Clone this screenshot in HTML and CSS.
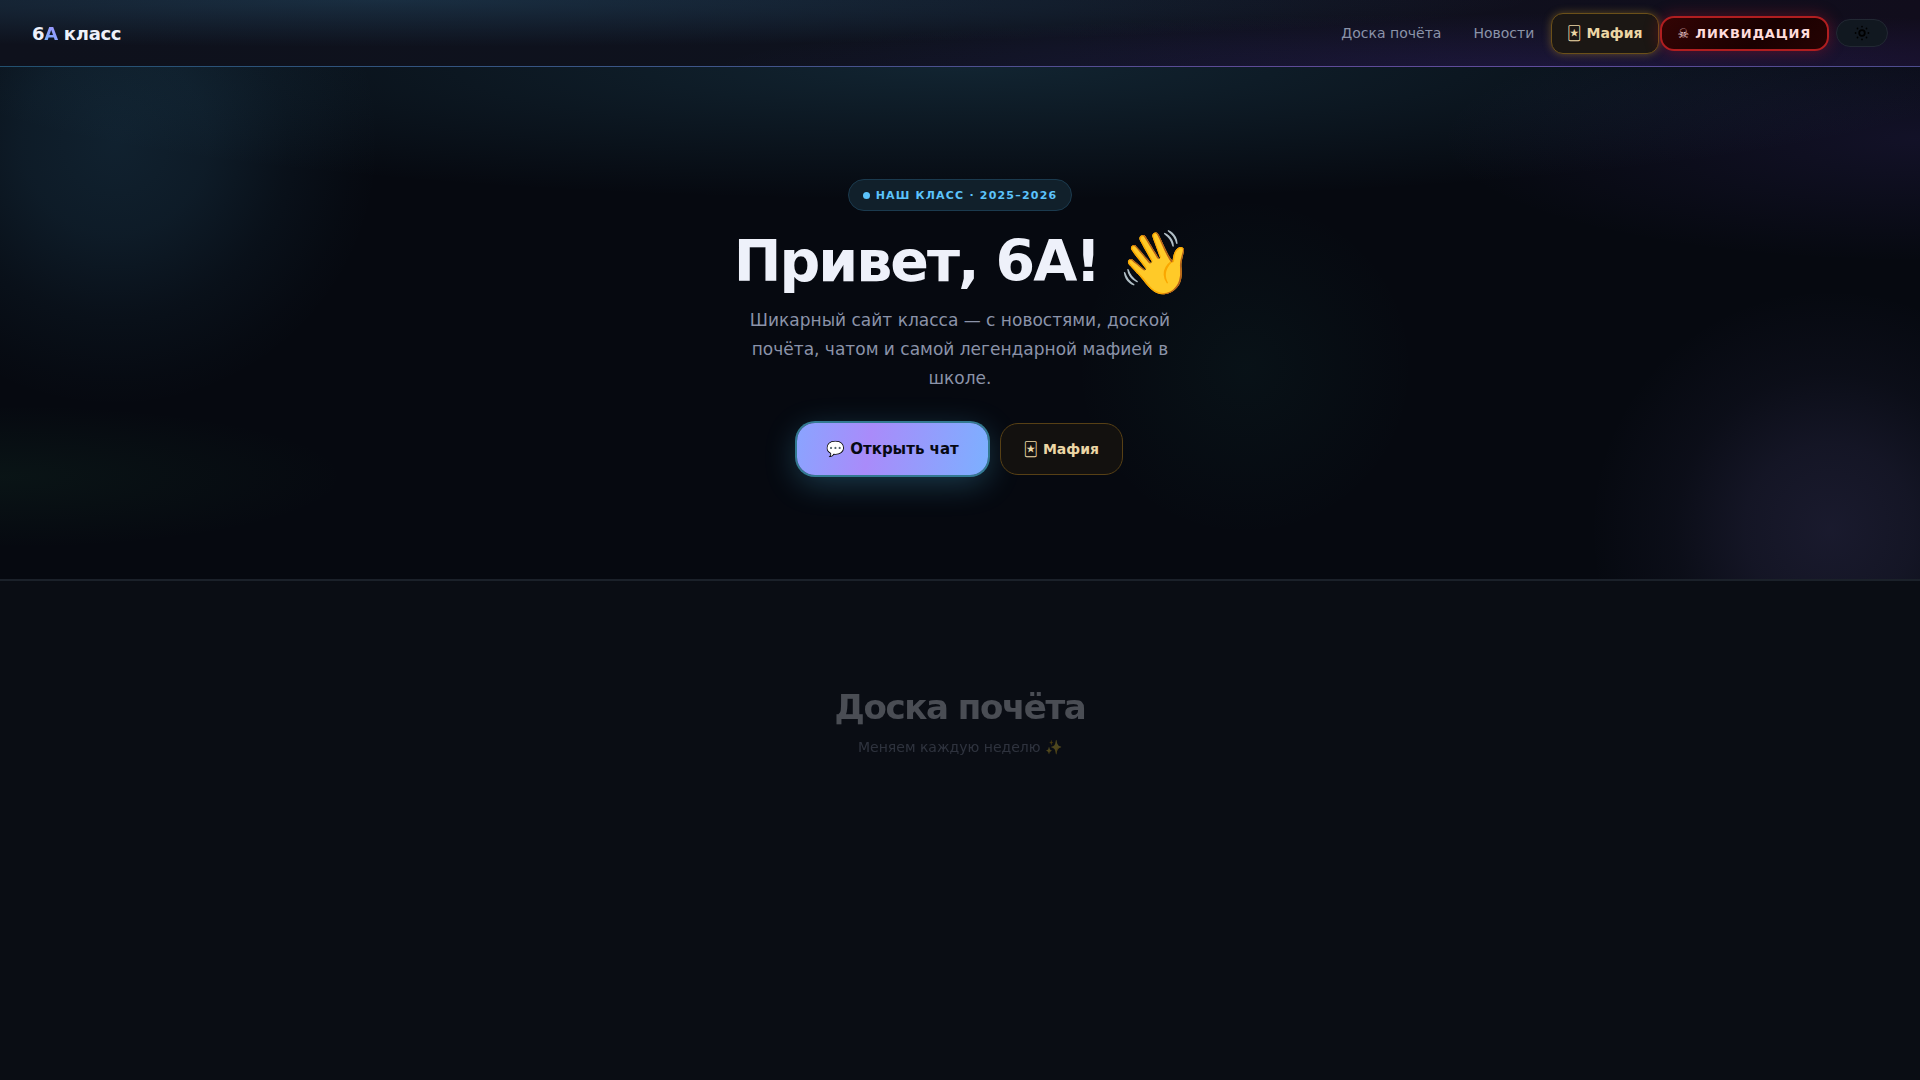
FILE: index.html
```html
<!DOCTYPE html>
<html lang="ru">
<head>
  <meta charset="UTF-8">
  <meta name="viewport" content="width=device-width, initial-scale=1.0">
  <title>6А класс</title>
  <link rel="stylesheet" href="styles.css">
</head>
<body>
  <!-- Шапка -->
  <header class="header">
    <a class="logo" href="#top">6<span class="logo-accent">А</span> класс</a>
    <nav class="nav">
      <a class="nav-link" href="#honor">Доска почёта</a>
      <a class="nav-link" href="#news">Новости</a>
      <a class="nav-mafia" href="#mafia">🃏 Мафия</a>
      <a class="nav-liq" href="#liquidation">☠ ЛИКВИДАЦИЯ</a>
      <button class="theme-toggle" type="button" aria-label="Сменить тему">
        <svg class="theme-icon" viewBox="0 0 16 16" aria-hidden="true">
          <circle cx="8" cy="8" r="2.8" fill="none" stroke="#000" stroke-width="1.8"/>
          <g fill="#000">
            <circle cx="8" cy="1.6" r="0.9"/>
            <circle cx="8" cy="14.4" r="0.9"/>
            <circle cx="1.6" cy="8" r="0.9"/>
            <circle cx="14.4" cy="8" r="0.9"/>
            <circle cx="3.5" cy="3.5" r="0.9"/>
            <circle cx="12.5" cy="3.5" r="0.9"/>
            <circle cx="3.5" cy="12.5" r="0.9"/>
            <circle cx="12.5" cy="12.5" r="0.9"/>
          </g>
        </svg>
      </button>
    </nav>
  </header>

  <main>
    <!-- Первый экран -->
    <section class="hero" id="top">
      <div class="blob blob-blue"></div>
      <div class="blob blob-purple"></div>
      <div class="blob blob-green"></div>
      <div class="hero-inner">
        <span class="badge"><span class="badge-dot"></span>НАШ КЛАСС · 2025–2026</span>
        <h1 class="hero-title">Привет, 6А! <span class="wave">👋</span></h1>
        <p class="hero-text">Шикарный сайт класса — с новостями, доской почёта, чатом и самой легендарной мафией в школе.</p>
        <div class="hero-buttons">
          <a class="btn btn-primary" href="#chat">💬 Открыть чат</a>
          <a class="btn btn-mafia" href="#mafia">🃏 Мафия</a>
        </div>
      </div>
    </section>

    <!-- Доска почёта -->
    <section class="honor" id="honor">
      <div class="section-head">
        <h2 class="section-title">Доска почёта</h2>
        <p class="section-text">Меняем каждую неделю ✨</p>
      </div>
    </section>
  </main>
</body>
</html>
```
FILE: styles.css
```css
* {
  box-sizing: border-box;
  margin: 0;
  padding: 0;
}

body {
  font-family: "DejaVu Sans", sans-serif;
  background: #0a0d14;
  color: #eef1fa;
  min-height: 100vh;
}

a {
  text-decoration: none;
}

/* Шапка */
.header {
  position: relative;
  display: flex;
  align-items: center;
  justify-content: space-between;
  height: 67px;
  padding: 0 32px 1px;
  background:
    linear-gradient(90deg, #22506f, #3c5688 35%, #5d4b97 65%, #5f4d9c 80%, #4d4d8e) bottom / 100% 1px no-repeat,
    radial-gradient(ellipse 60% 70% at 20% 0%, rgba(70, 160, 210, 0.2), transparent),
    radial-gradient(ellipse 45% 80% at 82% 100%, rgba(110, 70, 255, 0.13), transparent),
    linear-gradient(90deg, #0e111c, #0e121e 55%, #110d1c);
}

.logo {
  font-size: 18px;
  font-weight: 700;
  letter-spacing: -0.3px;
  color: #eef1fa;
}

.logo-accent {
  background: linear-gradient(45deg, #6cb6ff, #a98bfa);
  -webkit-background-clip: text;
  background-clip: text;
  color: transparent;
}

.nav {
  display: flex;
  align-items: center;
}

.nav-link {
  padding: 8px 16px;
  font-size: 14px;
  line-height: 16px;
  color: #8b93a9;
}

.nav-mafia {
  margin: 0 1px;
  padding: 12px 15px;
  border: 1px solid #6b5019;
  border-radius: 12px;
  background: #1b1714;
  box-shadow: 0 0 8px rgba(212, 160, 40, 0.4);
  font-size: 14px;
  line-height: 15px;
  font-weight: 700;
  color: #ecd6a5;
}

.nav-liq {
  padding: 8px 16px;
  border: 2px solid #b01e20;
  border-radius: 14px;
  background: linear-gradient(135deg, #330404, #190000 60%, #260303);
  box-shadow: 0 0 16px rgba(220, 20, 40, 0.35);
  font-size: 13px;
  line-height: 15px;
  font-weight: 700;
  letter-spacing: 0.8px;
  color: #ffdcdc;
}

.theme-toggle {
  display: flex;
  align-items: center;
  justify-content: center;
  width: 52px;
  height: 28px;
  margin-left: 7px;
  border: 1px solid #222833;
  border-radius: 14px;
  background: #111820;
  cursor: pointer;
}

.theme-icon {
  width: 16px;
  height: 16px;
}

/* Первый экран */
.hero {
  position: relative;
  overflow: hidden;
  padding: 112px 24px 104px;
  border-bottom: 2px solid #1b212a;
  background:
    radial-gradient(ellipse 54% 26% at 50% 0%, rgba(70, 160, 200, 0.18), transparent),
    radial-gradient(ellipse 25% 24% at 100% 14%, rgba(120, 85, 230, 0.11), transparent),
    radial-gradient(ellipse 18% 14% at 0% 80%, rgba(50, 150, 90, 0.08), transparent),
    #060910;
}

.blob {
  position: absolute;
  border-radius: 50%;
}

.blob-blue {
  left: -150px;
  top: -190px;
  width: 530px;
  height: 530px;
  background: radial-gradient(closest-side, rgba(70, 160, 210, 0.16), rgba(70, 160, 210, 0.12) 35%, rgba(70, 160, 210, 0.05) 65%, rgba(70, 160, 210, 0.01) 90%, transparent);
}

.blob-purple {
  right: -150px;
  bottom: -190px;
  width: 480px;
  height: 480px;
  background: radial-gradient(closest-side, rgba(145, 130, 225, 0.14), rgba(145, 130, 225, 0.1) 35%, rgba(145, 130, 225, 0.04) 65%, rgba(145, 130, 225, 0.01) 90%, transparent);
}

.blob-green {
  left: 56%;
  top: 130px;
  width: 340px;
  height: 340px;
  background: radial-gradient(closest-side, rgba(50, 180, 160, 0.05), transparent);
}

.hero-inner {
  position: relative;
  display: flex;
  flex-direction: column;
  align-items: center;
  text-align: center;
}

.badge {
  display: flex;
  align-items: center;
  gap: 6px;
  padding: 9px 14px 8px;
  border: 1px solid #1b3a4e;
  border-radius: 16px;
  background: #11202b;
  font-size: 11px;
  line-height: 13px;
  font-weight: 700;
  letter-spacing: 1.2px;
  color: #5cc3fb;
}

.badge-dot {
  width: 7px;
  height: 7px;
  border-radius: 50%;
  background: #5cc3fb;
}

.hero-title {
  align-self: stretch;
  margin-top: 18px;
  font-size: 57px;
  line-height: 64px;
  font-weight: 700;
  letter-spacing: -2px;
}

/* рука чуть крупнее текста */
.wave {
  margin-right: -6px;
  font-size: 62px;
  line-height: 0;
  vertical-align: -3px;
}

.hero-text {
  max-width: 460px;
  margin-top: 13px;
  font-size: 17px;
  line-height: 29px;
  color: #8b93a9;
}

.hero-buttons {
  display: flex;
  align-items: center;
  gap: 12px;
  margin-top: 30px;
}

.btn {
  border-radius: 18px;
  line-height: 20px;
  font-weight: 700;
}

.btn-primary {
  padding: 16px 29px;
  background: linear-gradient(100deg, #8aa4ff, #a98bfa 38%, #7cb0ff);
  box-shadow: 0 0 0 2px #337a92, 0 8px 32px rgba(70, 170, 210, 0.32);
  font-size: 15px;
  color: #060913;
}

.btn-mafia {
  padding: 15px 23px;
  border: 1px solid #574015;
  background: #13110f;
  font-size: 14px;
  color: #ecd6a5;
}

/* Доска почёта */
.honor {
  padding: 106px 24px;
}

.section-head {
  text-align: center;
  opacity: 0.28;
}

.section-title {
  font-size: 34px;
  line-height: 41px;
  font-weight: 700;
  letter-spacing: -1.4px;
}

.section-text {
  margin-top: 8px;
  font-size: 14px;
  line-height: 22px;
  color: #8b93a9;
}
```
